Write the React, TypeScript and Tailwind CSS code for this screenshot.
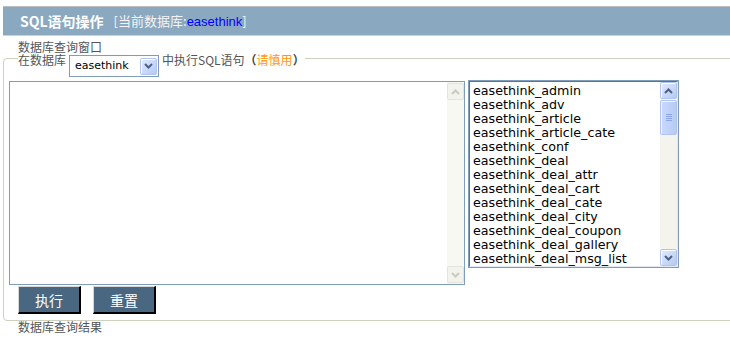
import React from "react";

const tables = [
  "easethink_admin",
  "easethink_adv",
  "easethink_article",
  "easethink_article_cate",
  "easethink_conf",
  "easethink_deal",
  "easethink_deal_attr",
  "easethink_deal_cart",
  "easethink_deal_cate",
  "easethink_deal_city",
  "easethink_deal_coupon",
  "easethink_deal_gallery",
  "easethink_deal_msg_list",
];

function Chevron({ dir, color }: { dir: "up" | "down"; color: string }) {
  return (
    <svg width="9" height="6" viewBox="0 0 9 6" fill="none">
      {dir === "up" ? (
        <path d="M1 5 L4.5 1.5 L8 5" stroke={color} strokeWidth="2" />
      ) : (
        <path d="M1 1 L4.5 4.5 L8 1" stroke={color} strokeWidth="2" />
      )}
    </svg>
  );
}

function ArrowBtn({ dir, active }: { dir: "up" | "down"; active: boolean }) {
  if (active) {
    return (
      <div className="h-[17px] w-[17px] shrink-0 rounded-[2px] border border-[#b1c5f3] bg-linear-to-br from-[#e3ebfe] to-[#b4c9f6] shadow-[inset_1px_1px_0_#ffffff] flex items-center justify-center">
        <Chevron dir={dir} color="#4d6185" />
      </div>
    );
  }
  return (
    <div className="h-[17px] w-[17px] shrink-0 rounded-[2px] border border-[#e4e4da] bg-[#f3f3ed] flex items-center justify-center">
      <Chevron dir={dir} color="#cacabd" />
    </div>
  );
}

function ScrollBar({ active }: { active: boolean }) {
  return (
    <div
      className={
        active
          ? "w-[17px] h-full shrink-0 flex flex-col bg-[#f4f3ee]"
          : "w-[17px] h-full shrink-0 flex flex-col bg-[#f8f8f3] pt-[1px] pb-[1px]"
      }
    >
      <ArrowBtn dir="up" active={active} />
      {active && (
        <div className="mt-[1px] h-[35px] w-[17px] rounded-[2px] border border-[#b1c5f3] bg-linear-to-r from-[#cad9fd] to-[#b7cbf7] shadow-[inset_1px_1px_0_#eef3fe] flex flex-col items-center justify-center gap-[1px]">
          <div className="w-[6px] h-[1px] bg-[#8ca6ea]" />
          <div className="w-[6px] h-[1px] bg-[#8ca6ea]" />
          <div className="w-[6px] h-[1px] bg-[#8ca6ea]" />
          <div className="w-[6px] h-[1px] bg-[#8ca6ea]" />
        </div>
      )}
      <div className="flex-1" />
      <ArrowBtn dir="down" active={active} />
    </div>
  );
}

export default function App() {
  return (
    <div className="w-[730px] h-[342px] overflow-hidden bg-white font-['Noto_Sans_CJK_SC',sans-serif]">
      <div className="pt-[6px] pl-[3px]">
        <div className="w-[740px] h-[30px] border-t border-b border-t-[#bdbdbd] border-b-[#c9d3dc] bg-[#8aa8c0] flex items-center pl-[17px]">
          <span className="text-[14px] font-bold text-white leading-[16px]">SQL语句操作</span>
          <span className="ml-[10px] text-[13px] text-[#f4f4f4] leading-[16px]">
            [当前数据库:
            <span className="text-[#0000ff] font-['Liberation_Sans',sans-serif]">easethink</span>]
          </span>
        </div>
      </div>

      <div className="mt-[5px] pl-[18px] text-[12px] leading-[12px] text-[#555555]">数据库查询窗口</div>

      <fieldset className="ml-[3px] w-[760px] border border-[#d0d0bf] rounded-[4px] pl-[5px] pb-[6px]">
        <legend className="ml-[9px] h-[10px] flex items-start text-[12px] leading-[12px] text-[#555555]">
          <span className="mt-[1px] whitespace-nowrap">在数据库</span>
          <div className="ml-[3px] mt-[2px] w-[90px] h-[22px] shrink-0 border border-[#7f9db9] bg-white flex items-center">
            <span className="pl-[5px] flex-1 text-[11px] leading-[14px] text-black font-['DejaVu_Sans',sans-serif]">
              easethink
            </span>
            <div className="mr-[1px]">
              <ArrowBtn dir="down" active={true} />
            </div>
          </div>
          <span className="ml-[3px] mt-[1px] whitespace-nowrap">
            中执行SQL语句<span className="font-bold text-[#444444]">（</span>
            <span className="text-[#ff9900]">请慎用</span>
            <span className="font-bold text-[#444444]">）</span>
          </span>
        </legend>

        <div className="pt-[17px] flex items-start gap-[3px]">
          <div className="mt-[1px] w-[456px] h-[204px] shrink-0 border border-[#7f9db9] bg-white flex">
            <div className="flex-1" />
            <ScrollBar active={false} />
          </div>

          <div className="w-[211px] h-[188px] shrink-0 border border-[#7f9db9] bg-white">
            <div className="h-full border border-[#e2e8f2] border-t-[#6f6f6f] border-l-[#6f6f6f] flex">
              <div className="flex-1 overflow-hidden pl-[3px] pt-[2px]">
                {tables.map((t) => (
                  <div
                    key={t}
                    className="text-[12.7px] leading-[14px] text-black whitespace-nowrap font-['DejaVu_Sans',sans-serif]"
                  >
                    {t}
                  </div>
                ))}
              </div>
              <ScrollBar active={true} />
            </div>
          </div>
        </div>

        <div className="flex gap-[12px] ml-[9px] mt-[1px]">
          <button className="w-[63px] h-[28px] bg-[#4a6781] text-white text-[14px] leading-[14px] border-t border-l border-t-[#d6d6d6] border-l-[#d6d6d6] border-b-2 border-r-2 border-b-black border-r-black">
            执行
          </button>
          <button className="w-[63px] h-[28px] bg-[#4a6781] text-white text-[14px] leading-[14px] border-t border-l border-t-[#d6d6d6] border-l-[#d6d6d6] border-b-2 border-r-2 border-b-black border-r-black">
            重置
          </button>
        </div>
      </fieldset>

      <div className="pl-[18px] text-[12px] leading-[12px] text-[#555555]">数据库查询结果</div>
    </div>
  );
}
